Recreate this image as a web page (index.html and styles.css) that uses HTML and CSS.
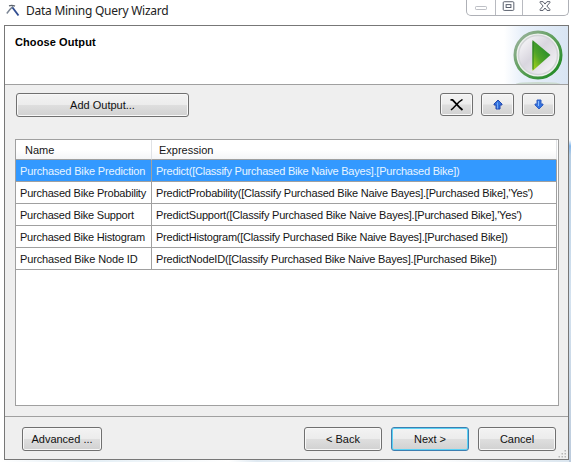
FILE: index.html
```html
<!DOCTYPE html>
<html lang="en">
<head>
<meta charset="utf-8">
<title>Data Mining Query Wizard</title>
<link rel="stylesheet" href="styles.css">
</head>
<body>
<div class="window">
  <header class="titlebar">
    <svg class="app-icon" width="14" height="14" viewBox="0 0 14 14" fill="none">
      <path d="M3 1.8Q6 .7 9 2.2" stroke="#5d636b" stroke-width="1.3"/>
      <path d="M7 2.4Q4 5 .8 9.5" stroke="#7b8594" stroke-width="1.4"/>
      <path d="M6.5 3.5l6 8" stroke="#304d91" stroke-width="1.8"/>
    </svg>
    <h1>Data Mining Query Wizard</h1>
    <div class="controls">
      <svg width="28" height="16" viewBox="0 0 28 16"><rect x="8.5" y="6.5" width="11" height="3" rx=".7" fill="#fff" stroke="#bdbfc5"/></svg>
      <svg width="27" height="16" viewBox="0 0 27 16" fill="#fff" stroke="#535967"><rect x="7.5" y="1.5" width="11" height="9" rx="1"/><rect x="10.5" y="4.5" width="5" height="3"/></svg>
      <svg width="46" height="16" viewBox="0 0 46 16"><path d="M17.5 1.5h3l2 2.5 2-2.5h3v1L24.4 6l3.1 3.5v1h-3l-2-2.5-2 2.5h-3v-1L20.6 6l-3.1-3.5z" fill="#fff" stroke="#565b68"/></svg>
    </div>
  </header>
  <main class="panel">
    <section class="banner">
      <h2>Choose Output</h2>
      <svg class="play" width="64" height="58" viewBox="0 0 64 58">
        <defs>
          <linearGradient id="sky"><stop stop-color="#fff"/><stop offset=".28" stop-color="#e8f0fa"/><stop offset="1" stop-color="#d9e5f3"/></linearGradient>
          <linearGradient id="ring" x2="1" y2="1"><stop stop-color="#a2b5a5"/><stop offset=".5" stop-color="#5b9e58"/><stop offset="1" stop-color="#15871b"/></linearGradient>
          <linearGradient id="face" x2="1" y2="1"><stop stop-color="#fff"/><stop offset=".45" stop-color="#d9d6df"/><stop offset="1" stop-color="#faf9fb"/></linearGradient>
          <linearGradient id="arrow" x1="0" y1="1" x2=".75" y2=".15"><stop stop-color="#b5dc17"/><stop offset=".5" stop-color="#4fa328"/><stop offset="1" stop-color="#258b2c"/></linearGradient>
        </defs>
        <path d="M0 0h64v58H0z" fill="url(#sky)"/>
        <ellipse cx="34" cy="58" rx="22" ry="2" fill="#cbdacf"/>
        <circle cx="34" cy="29" r="23" fill="#eef2ee" stroke="url(#ring)" stroke-width="3"/>
        <circle cx="34" cy="29" r="19.5" fill="url(#face)" stroke="#d3d5d8" stroke-width="1.5"/>
        <path d="M28.5 14L46.5 29 28.5 45z" fill="url(#arrow)"/>
        <path d="M29 15.5v28" stroke="#247926"/>
      </svg>
    </section>
    <section class="content">
      <div class="toolbar">
        <button class="add">Add Output...</button>
        <div class="tools">
          <button aria-label="Delete"><svg width="14" height="12" viewBox="0 0 14 12" fill="none" stroke="#000"><path d="M.5 .8h2l7.5 8 2.5 2.2" stroke-width="1.8"/><path d="M12.5 .5L9 3 3 9.3 1 11" stroke-width="1.5"/></svg></button>
          <button aria-label="Move up"><svg width="10" height="12" viewBox="0 0 10 12"><path d="M5 1L9 5v1H7v4H3V6H1V5z" fill="#3473df" stroke="#2449ad"/><path d="M4.5 3.5v6" stroke="#74aaf5"/></svg></button>
          <button aria-label="Move down"><svg width="10" height="12" viewBox="0 0 10 12"><path d="M3 1h4v4h2v1l-4 4-4-4V5h2z" fill="#3473df" stroke="#315fc1"/><path d="M4.5 2v5" stroke="#8abcff"/></svg></button>
        </div>
      </div>
      <div class="grid">
        <div class="row head"><div>Name</div><div>Expression</div></div>
        <div class="row selected"><div class="n1">Purchased Bike Prediction</div><div class="e1">Predict([Classify Purchased Bike Naive Bayes].[Purchased Bike])</div></div>
        <div class="row"><div class="n2">Purchased Bike Probability</div><div class="e2">PredictProbability([Classify Purchased Bike Naive Bayes].[Purchased Bike],'Yes')</div></div>
        <div class="row"><div class="n3">Purchased Bike Support</div><div class="e3">PredictSupport([Classify Purchased Bike Naive Bayes].[Purchased Bike],'Yes')</div></div>
        <div class="row"><div class="n4">Purchased Bike Histogram</div><div class="e4">PredictHistogram([Classify Purchased Bike Naive Bayes].[Purchased Bike])</div></div>
        <div class="row"><div class="n5">Purchased Bike Node ID</div><div class="e5">PredictNodeID([Classify Purchased Bike Naive Bayes].[Purchased Bike])</div></div>
      </div>
    </section>
    <footer class="actions">
      <button class="advanced">Advanced ...</button>
      <button class="back">&lt; Back</button>
      <button class="next">Next &gt;</button>
      <button class="cancel">Cancel</button>
      <svg class="grip" width="9" height="9" viewBox="0 0 9 9" fill="#b6b6b6"><path d="M6.5 0H8v1.500H6.500zM3.500 3H5v1.500H3.500zM6.500 3H8v1.500H6.500zM.5 6H2v1.500H.5zM3.500 6H5v1.500H3.500zM6.500 6H8v1.500H6.500z"/></svg>
    </footer>
  </main>
</div>
</body>
</html>
```
FILE: styles.css
```css
* { box-sizing: border-box; }
body { margin: 0; width: 571px; height: 462px; overflow: hidden; background: #fff; font: 11px/14px "Liberation Sans", Arial, sans-serif; color: #151515; }
.window { height: 462px; padding: 0 2px 2px 4px; background: linear-gradient(#fff 140px, #83b7ec 146px, #b5cde3 155px, #d4e2ef 300px, #bccbdc) right / 2px 100% no-repeat, linear-gradient(to right, #fff, #e3eef5 15%, #fff 40%, #e0eaf2 45%, #fff 75%, #dbe6ef) bottom / 100% 2px no-repeat, #fff; }
.titlebar { height: 25px; display: flex; align-items: flex-start; }
.app-icon { margin: 4px 0 0 2px; }
h1 { margin: 2px 0 0 6px; font: 12px/17px "Noto Sans", sans-serif; letter-spacing: -.26px; white-space: nowrap; color: #222; }
.controls { width: 103px; height: 16px; margin-left: auto; display: flex; border: 1px solid #aeb0b6; border-top: 0; border-radius: 0 0 5px 5px; overflow: hidden; }
.controls svg { flex: none; }
.controls svg + svg { border-left: 1px solid #b8bac0; }
.panel { height: 435px; border: 1px solid #777; background: #efefef; display: flex; flex-direction: column; }
.banner { height: 59px; flex: none; display: flex; justify-content: space-between; background: #fff; border-bottom: 1px solid #a0a0a0; }
h2 { margin: 9px 0 0 10px; font: bold 11px/14px "Liberation Sans", sans-serif; color: #000; letter-spacing: .1px; }
.content { height: 332px; flex: none; padding: 8px 9px 0 10px; border-bottom: 1px solid #a0a0a0; }
.toolbar { display: flex; justify-content: space-between; padding: 0 4px 0 1px; height: 46px; }
.tools { display: flex; gap: 8px; }
button { height: 24px; padding: 0; font: inherit; color: #111; border: 1px solid #707070; border-radius: 3px; background: linear-gradient(#f3f3f3, #ececec 48%, #dedede 52%, #d1d1d1); box-shadow: inset 0 0 0 1px #f8f8f8; display: flex; align-items: center; justify-content: center; white-space: nowrap; }
.tools button { width: 33px; height: 23px; }
.add { width: 173px; }
.grid { height: 267px; border: 1px solid #a0a0a0; background: #fff; }
.row { display: grid; grid-template-columns: 136px 1fr; height: 22px; margin-right: 1px; }
.row > div { padding: 4px 0 0 4px; border-right: 1px solid #a0a0a0; border-bottom: 1px solid #a0a0a0; white-space: nowrap; }
.row.head { height: 20px; background: linear-gradient(#fff 50%, #f3f4f6); }
.row.head > div { border-right-color: #e0e2e5; padding: 3px 0 0 9px; }
.row.head > div + div { padding-left: 7px; }
.selected { background: #39f; color: #e8f5ff; }
.n1 { letter-spacing: -.15px; }
.n2 { letter-spacing: -.21px; }
.n3 { letter-spacing: -.22px; }
.n4 { letter-spacing: -.22px; }
.n5 { letter-spacing: -.13px; }
.e1 { letter-spacing: -.22px; }
.e2 { letter-spacing: -.21px; }
.e3 { letter-spacing: -.2px; }
.e4 { letter-spacing: -.22px; }
.e5 { letter-spacing: -.2px; }
.actions { flex: 1; position: relative; display: flex; align-items: flex-start; padding: 10px 12px 0 17px; }
.advanced { width: 80px; margin-right: auto; }
.back, .next, .cancel { width: 78px; }
.next, .cancel { margin-left: 9px; }
.next { border-color: #3c7fb1; box-shadow: inset 0 0 0 1px #5bd1f4; }
.grip { position: absolute; right: 1px; bottom: 0; }
```
